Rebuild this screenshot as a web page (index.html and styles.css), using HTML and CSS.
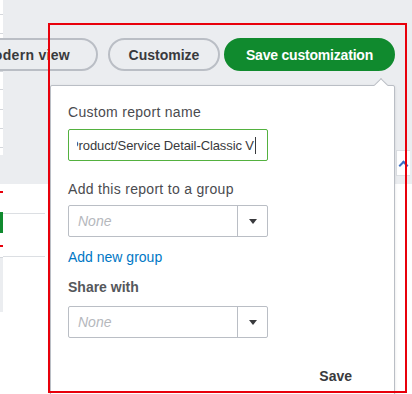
FILE: index.html
```html
<!DOCTYPE html>
<html lang="en">
<head>
    <meta charset="UTF-8">
    <meta name="viewport" content="width=device-width, initial-scale=1.0">
    <title>Save customization</title>
    <link rel="stylesheet" href="styles.css">
</head>
<body>
<div class="page">
    <!-- left edge of the report table behind the popover -->
    <div class="edge">
        <div class="edge-row r1"></div>
        <div class="edge-row r2"></div>
        <div class="edge-row r3"></div>
        <div class="edge-row r4"></div>
        <div class="edge-row r5"></div>
        <div class="edge-row r2"></div>
        <div class="edge-row r2"></div>
        <div class="edge-row last"></div>
        <div class="edge-gap"></div>
        <div class="edge-white">
            <div class="edge-red"></div>
            <div class="edge-green"></div>
            <div class="edge-red low"></div>
        </div>
        <div class="edge-gray"></div>
    </div>

    <div class="main">
        <div class="toolbar">
            <button class="pill modern">Switch to modern view</button>
            <button class="pill customize">Customize</button>
            <button class="pill primary">Save customization</button>
        </div>
        <div class="head-row">
            <div class="sort-cell"><span class="chevron"></span></div>
        </div>
        <div class="body-rows">
            <div class="body-row"></div>
            <div class="body-row tall"></div>
        </div>
    </div>

    <!-- popover under "Save customization" -->
    <div class="popover">
        <span class="arrow"></span>
        <label class="field-label">Custom report name</label>
        <div class="text-input">
            <div class="clip"><span class="value">Product/Service Detail-Classic V</span><span class="caret"></span></div>
        </div>

        <label class="field-label spaced">Add this report to a group</label>
        <div class="select">
            <span class="placeholder">None</span>
            <span class="select-btn"><span class="tri"></span></span>
        </div>
        <a class="link" href="#">Add new group</a>

        <label class="field-label bold">Share with</label>
        <div class="select share">
            <span class="placeholder">None</span>
            <span class="select-btn"><span class="tri"></span></span>
        </div>

        <div class="actions">
            <button class="text-btn">Save</button>
        </div>
    </div>

    <div class="highlight"></div>
</div>
</body>
</html>
```

FILE: styles.css
```css
body {
    margin: 0;
    font-family: "Liberation Sans", Arial, sans-serif;
    color: #393a3d;
}
.page {
    position: relative;
    width: 412px;
    height: 394px;
    overflow: hidden;
    display: flex;
    background: #fff;
}

/* table edge */
.edge {
    width: 3px;
    flex-shrink: 0;
    display: flex;
    flex-direction: column;
}
.edge-row {
    height: 18px;
    background: #fff;
    border-bottom: 1px solid #d4d7dc;
}
.edge-row.r1 { height: 14px; }
.edge-row.r3 { height: 37px; }
.edge-row.r4 { height: 17px; }
.edge-row.r5 { height: 19px; }
.edge-row.last {
    height: 7px;
    border-bottom: none;
}
.edge-gap {
    height: 29px;
    background: #ebedf0;
}
.edge-white {
    height: 74px;
    background: #fff;
    border-bottom: 1px solid #d4d7dc;
    padding-top: 7px;
    box-sizing: border-box;
}
.edge-red {
    height: 2px;
    background: #e8000b;
}
.edge-red.low { margin-top: 12px; }
.edge-green {
    height: 21px;
    margin-top: 19px;
    background: #108a2e;
}
.edge-gray {
    height: 54px;
    background: #ebedf0;
}

.main {
    flex: 1;
    display: flex;
    flex-direction: column;
    min-width: 0;
}
.toolbar {
    height: 150px;
    background: #ebedf0;
    display: flex;
    justify-content: flex-end;
    align-items: flex-start;
    padding: 38px 17px 0 0;
    box-sizing: border-box;
}
.pill {
    flex-shrink: 0;
    height: 33px;
    padding: 0;
    border: 2px solid #babec5;
    border-radius: 17px;
    background: #ebedf0;
    color: #393a3d;
    font-family: inherit;
    font-size: 14px;
    font-weight: bold;
    white-space: nowrap;
}
.pill.modern {
    padding: 0 26px 0 20px;
    letter-spacing: 0.3px;
}
.pill.customize {
    width: 112px;
    margin-left: 10px;
}
.pill.primary {
    width: 171px;
    margin-left: 4px;
    background: #108a2e;
    border-color: #108a2e;
    color: #fff;
    letter-spacing: -0.2px;
}
.head-row {
    height: 34px;
    background: #ebedf0;
    display: flex;
    justify-content: flex-end;
    align-items: flex-start;
}
.sort-cell {
    width: 14px;
    height: 26px;
    margin-right: 2px;
    background: #fff;
    border: 1px solid #dcdfe3;
    border-right: none;
    box-sizing: border-box;
    display: flex;
    justify-content: center;
    padding-top: 11px;
}
.chevron {
    width: 5px;
    height: 5px;
    border-left: 2px solid #3d6fc4;
    border-top: 2px solid #3d6fc4;
    transform: rotate(45deg);
}
.body-rows { flex: 1; }
.body-row {
    height: 29px;
    border-bottom: 1px solid #dcdfe3;
    margin-right: 367px;
}
.body-row.tall { height: 42px; }

/* popover */
.popover {
    position: absolute;
    left: 50px;
    top: 85px;
    width: 345px;
    height: 330px;
    box-sizing: border-box;
    background: #fff;
    border: 1px solid #babec5;
    border-radius: 2px;
    box-shadow: 0 1px 3px rgba(0, 0, 0, 0.12);
    padding: 16px 17px;
    display: flex;
    flex-direction: column;
    align-items: flex-start;
}
.arrow {
    position: absolute;
    top: -6px;
    left: 325px;
    width: 9px;
    height: 9px;
    background: #fff;
    border-left: 1px solid #babec5;
    border-top: 1px solid #babec5;
    transform: rotate(45deg);
}
.field-label {
    font-size: 14px;
    line-height: 20px;
    letter-spacing: 0.3px;
    color: #4a4b4f;
}
.field-label.spaced { margin-top: 18px; }
.field-label.bold {
    font-weight: bold;
    letter-spacing: 0;
    margin-top: 10px;
    color: #55575b;
}
.text-input {
    margin-top: 7px;
    width: 200px;
    height: 32px;
    box-sizing: border-box;
    border: 1px solid #53b13f;
    border-radius: 2px;
    padding: 0 8px;
    display: flex;
    align-items: center;
}
.clip {
    overflow: hidden;
    white-space: nowrap;
    display: flex;
    align-items: center;
    font-size: 13px;
    letter-spacing: -0.1px;
}
.value { margin-left: -7px; }
.caret {
    width: 1px;
    height: 17px;
    margin-left: 1px;
    background: #393a3d;
}
.select {
    margin-top: 6px;
    width: 200px;
    height: 32px;
    box-sizing: border-box;
    border: 1px solid #babec5;
    border-radius: 2px;
    display: flex;
    align-items: stretch;
}
.select.share { margin-top: 9px; }
.placeholder {
    flex: 1;
    padding-left: 9px;
    font-size: 14px;
    font-style: italic;
    color: #b5b8bd;
    display: flex;
    align-items: center;
}
.select-btn {
    width: 29px;
    border-left: 1px solid #babec5;
    display: flex;
    align-items: center;
    justify-content: center;
}
.tri {
    width: 0;
    height: 0;
    border-left: 4px solid transparent;
    border-right: 4px solid transparent;
    border-top: 5px solid #393a3d;
}
.link {
    margin-top: 10px;
    font-size: 14px;
    line-height: 20px;
    color: #0077c5;
    text-decoration: none;
}
.actions {
    margin-top: 28px;
    align-self: stretch;
    display: flex;
    justify-content: flex-end;
    padding-right: 25px;
}
.text-btn {
    border: none;
    background: none;
    padding: 0;
    font-family: inherit;
    font-size: 14px;
    line-height: 20px;
    font-weight: bold;
    color: #393a3d;
}

/* red annotation frame */
.highlight {
    position: absolute;
    left: 48px;
    top: 23px;
    width: 359px;
    height: 370px;
    box-sizing: border-box;
    border: 2px solid #e8000b;
}
```
